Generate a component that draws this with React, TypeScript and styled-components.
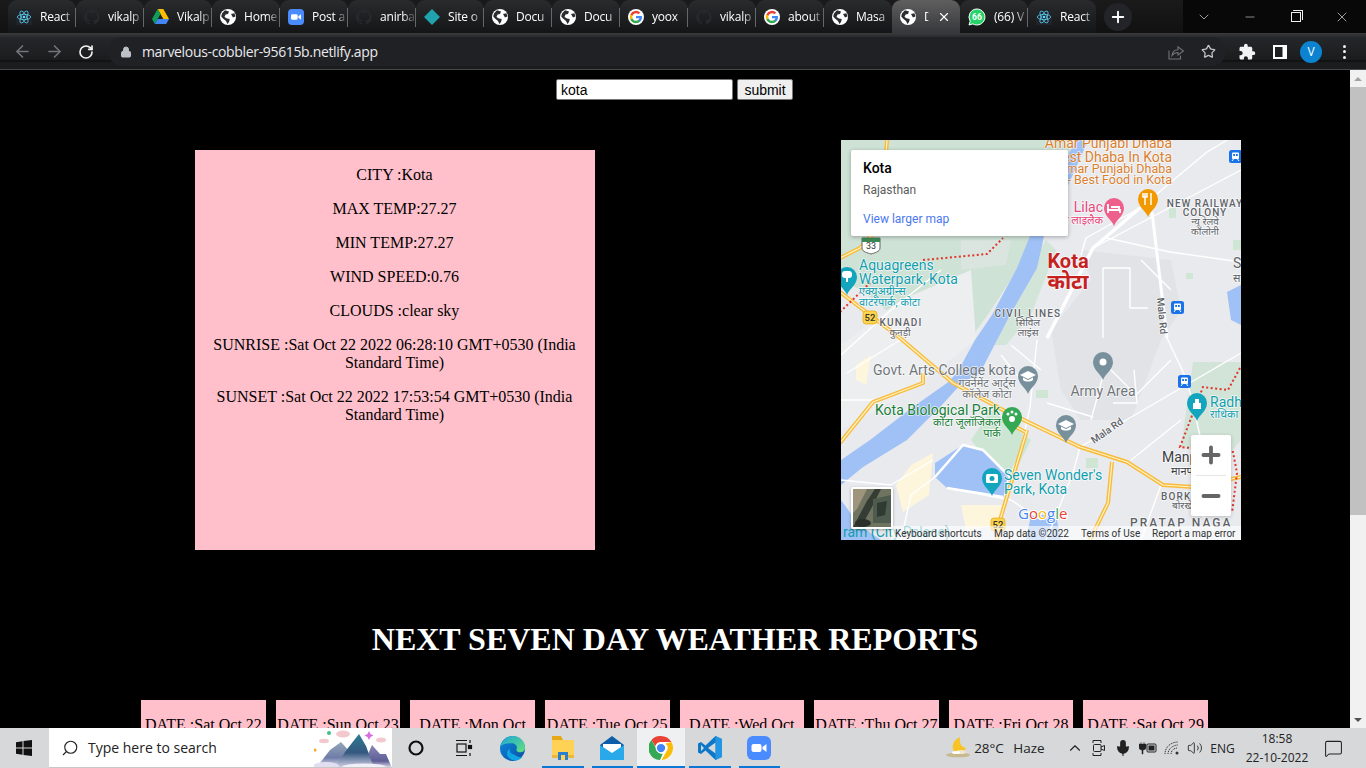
import React from "react";
import styled, { createGlobalStyle } from "styled-components";
import {
  ArrowLeft, ArrowRight, RotateCw, Lock, Star, ChevronDown, Minus, X, Plus,
  Search, ChevronUp, Mic, Volume2, MessageSquare,
} from "lucide-react";
import { MdExtension } from "react-icons/md";

const Global = createGlobalStyle`
  html, body { margin: 0; padding: 0; height: 100%; overflow: hidden; background: #000; }
  * { box-sizing: border-box; }
`;

const Desktop = styled.div`
  width: 1366px; height: 768px; display: flex; flex-direction: column; overflow: hidden;
  font-family: "Open Sans", "Liberation Sans", sans-serif;
`;

/* ---------- browser chrome ---------- */
const TabStrip = styled.div`
  height: 33px; flex: none; display: flex; align-items: flex-end; padding-left: 8px;
  background: linear-gradient(#1a1a1b, #111112);
`;
const Tab = styled.div<{ $active?: boolean; $plain?: boolean }>`
  width: 68px; height: 33px; flex: none; display: flex; align-items: center; gap: 8px; padding: 0 0 0 8px;
  position: relative; border-radius: 9px 9px 0 0; color: #fff; font-size: 12px;
  background: ${(p) => (p.$active ? "linear-gradient(#5f5f60, #36373a)" : "linear-gradient(#2a2b2d, #141517)")};
  &::after {
    content: ""; position: absolute; right: 0; top: 8px; bottom: 6px; width: 1px;
    background: ${(p) => (p.$plain ? "transparent" : "#66676a")};
  }
`;
const TabTitle = styled.span`
  flex: 1; overflow: hidden; white-space: nowrap; letter-spacing: -0.2px;
  -webkit-mask-image: linear-gradient(90deg, #000 62%, rgba(0, 0, 0, 0.25) 92%);
`;
const TabClose = styled(X)`
  flex: none; margin-right: 9px; color: #fff;
`;
const NewTab = styled.div`
  width: 28px; height: 28px; border-radius: 50%; margin: 0 0 2px 8px; background: #232427; color: #fff;
  display: flex; align-items: center; justify-content: center; flex: none;
`;
const Spacer = styled.div`flex: 1;`;
const WindowControls = styled.div`
  display: flex; height: 33px; background: #080808; flex: none; width: 183px; color: #e8e8e8; padding-right: 1px; justify-content: flex-end;
`;
const WindowButton = styled.div`
  width: 46px; display: flex; align-items: center; justify-content: center; flex: none;
`;
const RestoreGlyph = styled.div`
  width: 10px; height: 10px; border: 1px solid #eee; position: relative;
  &::after {
    content: ""; position: absolute; left: 1px; top: -3px; width: 9px; height: 9px;
    border-top: 1px solid #eee; border-right: 1px solid #eee;
  }
`;
const Toolbar = styled.div`
  height: 37px; flex: none; display: flex; align-items: center; padding: 1px 4px 0 6px;
  background: linear-gradient(#3b3b3d 0, #252629 5px, #1b1c1e 27px, #0a0a0a 28px, #1b1c1e 29px, #1b1c1e 36px);
  border-bottom: 1px solid #47484a;
`;
const ToolButton = styled.div<{ $dim?: boolean; $w?: number }>`
  width: ${(p) => p.$w ?? 32}px; height: 28px; display: flex; align-items: center; justify-content: center; flex: none;
  color: ${(p) => (p.$dim ? "#737477" : "#f1f3f4")};
`;
const Omnibox = styled.div`
  flex: 1; height: 29px; border-radius: 15px; background: #202124; margin-left: 6px; margin-right: 4px;
  display: flex; align-items: center; padding: 0 2px 0 12px; color: #e8eaed; font-size: 14px;
`;
const LockSlot = styled.div`
  width: 22px; display: flex; align-items: center; color: #bdc1c6;
`;
const UrlText = styled.span`flex: 1; font-family: "Open Sans", sans-serif; letter-spacing: -0.34px;`;
const Avatar = styled.div`
  width: 22px; height: 22px; border-radius: 50%; background: #0b83d0; color: #fff;
  font-size: 12px; display: flex; align-items: center; justify-content: center;
`;
const Dots = styled.div`
  display: flex; flex-direction: column; gap: 2.5px;
  & > i { width: 3px; height: 3px; border-radius: 50%; background: #f1f3f4; display: block; }
`;

/* ---------- page ---------- */
const Viewport = styled.div`
  flex: 1; min-height: 0; display: flex; overflow: hidden; background: #000;
`;
const Page = styled.main`
  flex: 1; min-width: 0; overflow: hidden; color: #000;
  font-family: "Liberation Serif", "Times New Roman", serif; font-size: 16px;
`;
const SearchForm = styled.form`
  display: flex; justify-content: center; gap: 4px; padding: 9px 1px 0 0; height: 70px;
`;
const CityInput = styled.input`
  width: 177px; height: 21px; border: 1px solid #767676; border-radius: 2px; background: #fff; padding: 1px 2px 1px 4px;
  font-family: "Liberation Sans", Arial, sans-serif; font-size: 14px; color: #000; outline: none;
`;
const SubmitButton = styled.button`
  width: 56px; height: 21px; padding: 0; border: 1px solid #767676; border-radius: 2px; background: #efefef;
  font-family: "Liberation Sans", Arial, sans-serif; font-size: 14px; color: #000;
`;
const WeatherRow = styled.section`
  display: flex; align-items: flex-start; padding-left: 195px; gap: 246px;
`;
const CurrentCard = styled.div`
  width: 400px; height: 400px; margin-top: 10px; padding-right: 1px; background: #ffc0cb; text-align: center; overflow: hidden;
`;
const Line = styled.p`margin: 16px 0;`;
const MapFrame = styled.div`
  width: 400px; height: 400px; position: relative; overflow: hidden; background: #e8eaed; flex: none;
  font-family: Roboto, "Liberation Sans", sans-serif;
`;
const MapDrawing = styled.svg`display: block;`;
const InfoBox = styled.div`
  position: absolute; left: 10px; top: 10px; width: 217px; height: 86px; background: #fff; padding: 9px 12px;
  box-shadow: 0 1px 4px rgba(0, 0, 0, 0.3); border-radius: 2px;
`;
const InfoTitle = styled.div`font-size: 14px; font-weight: 500; line-height: 18px; color: #000;`;
const InfoSub = styled.div`font-size: 12px; line-height: 16px; color: #5b5b5b; margin-top: 5px;`;
const InfoLink = styled.div`font-size: 12px; line-height: 16px; color: #4a78f0; margin-top: 13px;`;
const ZoomBox = styled.div`
  position: absolute; left: 350px; top: 295px; width: 40px; height: 81px; background: #fff; border-radius: 2px;
  display: flex; flex-direction: column; align-items: center; color: #666;
  box-shadow: 0 1px 4px rgba(0, 0, 0, 0.2);
`;
const ZoomButton = styled.div`
  height: 40px; width: 100%; display: flex; align-items: center; justify-content: center;
`;
const ZoomRule = styled.div`width: 30px; height: 1px; background: #e6e6e6; flex: none;`;
const SatThumb = styled.div`
  position: absolute; left: 10px; top: 347px; width: 42px; height: 42px; border: 2px solid #fff; border-radius: 2px;
  overflow: hidden; background: #5d6a55; box-shadow: 0 1px 3px rgba(0,0,0,.3);
`;
const Attribution = styled.div`
  position: absolute; left: 50px; right: 0; bottom: 0; height: 14px; background: rgba(255, 255, 255, 0.62);
  display: flex; align-items: center; font-size: 10px; color: #333; white-space: nowrap; padding-left: 4px;
`;
const AttrItem = styled.span<{ $w: number }>`width: ${(p) => p.$w}px; flex: none;`;
const Heading = styled.h1`
  margin: 71px 0 42px; font-size: 32px; line-height: 37px; font-weight: 700; color: #fff; text-align: center;
`;
const ForecastRow = styled.section`
  display: grid; grid-template-columns: repeat(8, 124.6px); column-gap: 10px; justify-content: center; padding-right: 1px;
`;
const DayCard = styled.div`
  height: 220px; background: #ffc0cb; text-align: center;
`;
const Scrollbar = styled.div`
  width: 16px; flex: none; background: #f1f1f1; display: flex; flex-direction: column; align-items: center;
`;
const ScrollArrow = styled.div<{ $down?: boolean }>`
  width: 16px; height: 17px; flex: none; display: flex; align-items: center; justify-content: center;
  &::before {
    content: ""; border-left: 4px solid transparent; border-right: 4px solid transparent;
    ${(p) => (p.$down ? "border-top: 4px solid #505050;" : "border-bottom: 4px solid #a3a3a3;")}
  }
`;
const ScrollThumb = styled.div`width: 16px; height: 428px; background: #c1c1c1; flex: none;`;
const ScrollTrack = styled.div`flex: 1;`;

/* ---------- taskbar ---------- */
const Taskbar = styled.footer`
  height: 40px; flex: none; display: flex; align-items: stretch; background: #d6d8da; color: #111; position: relative;
`;
const StartButton = styled.div`
  width: 48px; display: flex; align-items: center; justify-content: center; flex: none;
`;
const SearchBox = styled.div`
  width: 343px; margin-left: 1px; background: #fff; display: flex; align-items: center; padding-left: 12px; gap: 9px; flex: none;
  font-size: 14px; color: #222; position: relative; overflow: hidden; border-bottom: 1px solid #c8c8c8;
`;
const SearchArt = styled.svg`position: absolute; right: 0; top: 0;`;
const TaskIcon = styled.div<{ $w?: number; $open?: boolean; $active?: boolean }>`
  width: ${(p) => p.$w ?? 49.5}px; flex: none; display: flex; align-items: center; justify-content: center; position: relative;
  background: ${(p) => (p.$active ? "#eff0f1" : "transparent")};
  &::after {
    content: ""; position: absolute; left: ${(p) => (p.$active ? 0 : 4)}px; right: ${(p) => (p.$active ? 0 : 4)}px; bottom: 0; height: 2px;
    background: ${(p) => (p.$open ? "#0a78d4" : "transparent")};
  }
`;
const Tray = styled.div`
  flex: 1; display: flex; align-items: center; justify-content: flex-end; font-size: 12.5px; color: #222; padding-right: 15px;
`;
const TrayIcon = styled.div<{ $w: number }>`
  width: ${(p) => p.$w}px; flex: none; display: flex; align-items: center; justify-content: center;
`;
const TrayText = styled.span<{ $w: number; $size?: number }>`
  width: ${(p) => p.$w}px; flex: none; font-size: ${(p) => p.$size ?? 13.5}px; text-align: center; white-space: nowrap;
`;
const TrayGap = styled.div<{ $w: number }>`width: ${(p) => p.$w}px; flex: none;`;
const Clock = styled.div`
  width: 76px; flex: none; display: flex; flex-direction: column; align-items: center; font-size: 12px; line-height: 19px;
`;

/* ---------- icons ---------- */
const GlobeIcon = () => (
  <svg width="16" height="16" viewBox="0 0 16 16">
    <circle cx="8" cy="8" r="8" fill="#fff" />
    <path d="M5 1.200 9 2.500 8 5 5.500 5.500 4.500 8 7 9.500 9.800 10 9 13 7.500 15 6 12 3 9.500 1.200 7.500 2 4.500ZM11 5l3.500-.8.900 3.300L13 8.500Z" fill="#2b2c2f" />
  </svg>
);
const ReactIcon = () => (
  <svg width="16" height="18" viewBox="0 0 24 26">
    <rect x="0" y="1" width="24" height="24" fill="#20232a" />
    <g fill="none" stroke="#61dafb" strokeWidth="1.100">
      <ellipse cx="12" cy="13" rx="10" ry="4" />
      <ellipse cx="12" cy="13" rx="10" ry="4" transform="rotate(60 12 13)" />
      <ellipse cx="12" cy="13" rx="10" ry="4" transform="rotate(120 12 13)" />
    </g>
    <circle cx="12" cy="13" r="2" fill="#61dafb" />
  </svg>
);
const GithubIcon = () => (
  <svg width="16" height="16" viewBox="0 0 16 16">
    <path fill="#26282b" d="M8 0a8 8 0 0 0-2.500 15.600c.4.100.5-.2.500-.4v-1.400c-2.200.5-2.700-1-2.700-1-.4-.9-.9-1.200-.9-1.200-.7-.5.100-.5.100-.5.800.100 1.200.8 1.200.8.700 1.200 1.900.9 2.300.7.100-.5.300-.9.500-1.100-1.800-.2-3.600-.9-3.600-4 0-.9.300-1.600.8-2.100-.1-.2-.4-1 .1-2.100 0 0 .7-.2 2.200.8a7.500 7.500 0 0 1 4 0c1.500-1 2.200-.8 2.200-.8.400 1.100.2 1.900.1 2.100.5.600.8 1.300.8 2.100 0 3.100-1.900 3.700-3.700 3.900.3.300.6.800.6 1.500v2.200c0 .2.100.5.600.4A8 8 0 0 0 8 0Z" />
  </svg>
);
const DriveIcon = () => (
  <svg width="17" height="15" viewBox="0 0 24 21">
    <path d="M8 0h8l8 14h-8Z" fill="#fbbc04" />
    <path d="M8 0 0 14l4 7 8-14Z" fill="#0f9d58" />
    <path d="M4 21h16l4-7H8Z" fill="#4285f4" />
  </svg>
);
const ZoomIcon = ({ size = 16 }: { size?: number }) => (
  <svg width={size} height={size} viewBox="0 0 24 24">
    <rect width="24" height="24" rx="6" fill="#4a8cff" />
    <rect x="4.500" y="8" width="10" height="8" rx="2" fill="#fff" />
    <path d="M15.500 11 19.500 8v8l-4-3Z" fill="#fff" />
  </svg>
);
const SiteIcon = () => (
  <svg width="16" height="16" viewBox="0 0 16 16">
    <path d="M8 0l8 8-8 8-8-8Z" fill="#1fa3ae" />
  </svg>
);
const GoogleIcon = () => (
  <svg width="16" height="16" viewBox="0 0 18 18">
    <circle cx="9" cy="9" r="9" fill="#fff" />
    <path d="M15.700 9.200c0-.5 0-.9-.1-1.300H9v2.500h3.800a3.200 3.200 0 0 1-1.400 2.100v1.700h2.300c1.300-1.200 2-3 2-5Z" fill="#4285f4" />
    <path d="M9 16c1.900 0 3.500-.6 4.700-1.800l-2.300-1.700c-.6.400-1.400.7-2.400.7-1.900 0-3.400-1.200-4-2.900H2.700v1.800A7 7 0 0 0 9 16Z" fill="#34a853" />
    <path d="M5 10.300a4.200 4.200 0 0 1 0-2.600V5.900H2.700a7 7 0 0 0 0 6.200Z" fill="#fbbc05" />
    <path d="M9 4.800c1 0 2 .4 2.700 1.100l2-2A7 7 0 0 0 2.700 5.900L5 7.700c.6-1.700 2.100-2.900 4-2.900Z" fill="#ea4335" />
  </svg>
);
const WhatsIcon = () => (
  <svg width="18" height="18" viewBox="0 0 18 18">
    <path d="M9 1a8 8 0 0 0-6.800 12.200L1 17l3.900-1.100A8 8 0 1 0 9 1Z" fill="#25d366" stroke="#fff" strokeWidth="1" />
    <text x="9" y="12" fontSize="8.500" fontWeight="700" textAnchor="middle" fill="#fff" fontFamily="Roboto, sans-serif">66</text>
  </svg>
);
const ShareIcon = () => (
  <svg width="16" height="16" viewBox="0 0 16 16" fill="none" stroke="currentColor" strokeWidth="1.100">
    <path d="M1 6.500V15H12.500V11.500" />
    <path d="M4 11.500C4.500 7.500 7.500 5.800 10 5.800V2.800L15.500 7 10 11V8.500C7.500 8.500 5.500 9.500 4 11.500Z" />
  </svg>
);
const WindowsLogo = () => (
  <svg width="16" height="16" viewBox="0 0 16 16">
    <path d="M0 2.300 6.500 1.300V7.500H0ZM7.500 1.100 16 0V7.500H7.500ZM0 8.500H6.500V14.700L0 13.700ZM7.500 8.500H16V16L7.500 14.900Z" fill="#111" />
  </svg>
);
const TaskViewIcon = () => (
  <svg width="18" height="18" viewBox="0 0 18 18" fill="none" stroke="#111" strokeWidth="1.200">
    <path d="M1 1.500h11M1 16.500h11" />
    <rect x="2" y="5" width="9" height="8" />
    <path d="M15 1v3M15 14v3" />
    <rect x="13.500" y="6.500" width="3" height="3" fill="#111" />
  </svg>
);
const EdgeIcon = () => (
  <svg width="25" height="25" viewBox="0 0 24 24">
    <defs>
      <linearGradient id="edgeA" x1="0" y1="0" x2="1" y2="1">
        <stop offset="0" stopColor="#1ba6d8" />
        <stop offset="1" stopColor="#66e07c" />
      </linearGradient>
      <linearGradient id="edgeB" x1="0" y1="0" x2="1" y2="1">
        <stop offset="0" stopColor="#0c8adf" />
        <stop offset="1" stopColor="#0a4fa0" />
      </linearGradient>
    </defs>
    <circle cx="12" cy="12" r="12" fill="url(#edgeB)" />
    <path d="M.4 10C2 3.500 7.500 0 12.500 0 19 0 24 5 24 11c0 3.800-3.200 5.300-6 4.500-2-.6-2.600-2-2-3.300.8-3-1.800-5.200-4.500-5.200C7.500 7 2.500 7.500.4 10Z" fill="url(#edgeA)" />
    <path d="M13 17.500c-3 0-4.500-3-3.200-5.200-2 .5-3.700 3-3 5.700.8 3 4 5.500 8 5.500 2.500 0 5.200-1.200 7-3.500-2.800 1.300-6.300-1-8.800-2.500Z" fill="#10a4e4" />
  </svg>
);
const FolderIcon = () => (
  <svg width="22" height="24" viewBox="0 0 22 24">
    <path d="M0 0h9l2 4H0Z" fill="#e6a817" />
    <rect y="4" width="22" height="15" fill="#ffd154" />
    <rect y="19" width="22" height="3" fill="#e9b93b" />
    <rect x="6" y="16" width="10" height="8" fill="#2a7fcf" />
    <rect x="9" y="19" width="4" height="5" fill="#ffd154" />
  </svg>
);
const MailIcon = () => (
  <svg width="24" height="24" viewBox="0 0 24 24">
    <path d="M0 9 12 0l12 9v15H0Z" fill="#0c5ea8" />
    <path d="M3 8h18v8l-9 5-9-5Z" fill="#fff" />
    <path d="M0 9l12 8 12-8v15H0Z" fill="#29a8ea" />
  </svg>
);
const ChromeIcon = ({ size = 16 }: { size?: number }) => (
  <svg width={size} height={size} viewBox="0 0 48 48">
    <circle cx="24" cy="24" r="24" fill="#fff" />
    <path d="M24 0a24 24 0 0 1 20.800 12H24a12 12 0 0 0-11.500 8.500L5 8A24 24 0 0 1 24 0Z" fill="#ea4335" />
    <path d="M44.800 12A24 24 0 0 1 25 48l10-17.500A12 12 0 0 0 33 15Z" fill="#fbbc05" />
    <path d="M5 8l10.500 19a12 12 0 0 0 12 8.600L22 48A24 24 0 0 1 5 8Z" fill="#34a853" />
    <circle cx="24" cy="24" r="9.500" fill="#4285f4" stroke="#fff" strokeWidth="2.500" />
  </svg>
);
const VSCodeIcon = () => (
  <svg width="24" height="24" viewBox="0 0 24 24">
    <path d="M17.500 0 24 3v18l-6.500 3-10-9.500L3 18 0 16.500v-9L3 6l4.500 3.500Z" fill="#0e78c8" />
    <path d="M17.500 6.500 10 12l7.500 5.500ZM3 9v6l3-3Z" fill="#d6d8da" />
    <path d="M17.500 0 24 3v18l-6.500 3Z" fill="#2aa3ec" fillOpacity=".7" />
  </svg>
);
const WeatherGlyph = () => (
  <svg width="26" height="24" viewBox="0 0 26 24">
    <path d="M15 1c-1 6 1 10 6 11-2 5-7 6-11 4C6 13 7 4 15 1Z" fill="#f7c325" />
    <ellipse cx="13" cy="19" rx="12" ry="2.300" fill="#c9b98f" />
    <ellipse cx="16" cy="16" rx="5" ry="2" fill="#efe6cf" />
    <ellipse cx="11" cy="16.500" rx="4" ry="1.500" fill="#fff" />
  </svg>
);
const CameraTray = () => (
  <svg width="14" height="20" viewBox="0 0 14 20" fill="none" stroke="#222" strokeWidth="1">
    <path d="M1 5V2.500h8V5M1 15v2.500h8V15" />
    <rect x="1.500" y="6.500" width="7.500" height="7" rx="1" />
    <path d="M9 9l3.500-1.500v5L9 11" />
  </svg>
);
const PowerTray = () => (
  <svg width="18" height="14" viewBox="0 0 18 14" fill="#222">
    <path d="M2 1v2M5 1v2M0 3h7v3a3 3 0 0 1-3 3v4H3V9a3 3 0 0 1-3-3Z" stroke="#222" strokeWidth=".5" />
    <rect x="8" y="3" width="9" height="8" rx="1" fill="none" stroke="#222" />
    <rect x="9.500" y="4.500" width="6" height="5" />
  </svg>
);
const WifiTray = () => (
  <svg width="16" height="16" viewBox="0 0 16 16" fill="none" stroke="#333" strokeWidth="1" strokeDasharray="1.200 .8">
    <path d="M1 14C1 7 7 2 14 2" />
    <path d="M4 14C4 9 9 5 14 5" />
    <path d="M7 14C7 11 10 8 13 8" />
    <circle cx="13" cy="13" r="1.500" fill="#333" stroke="none" />
  </svg>
);

/* ---------- map drawing ---------- */
const Pin = ({ x, y, color, children }: { x: number; y: number; color: string; children?: React.ReactNode }) => (
  <g transform={`translate(${x} ${y})`}>
    <path d="M0 0C-2-6-10-10-10-18a10 10 0 0 1 20 0C10-10 2-6 0 0Z" fill={color} />
    <g transform="translate(0 -18)">{children}</g>
  </g>
);
const Metro = ({ x, y }: { x: number; y: number }) => (
  <g transform={`translate(${x - 6} ${y - 6})`}>
    <rect width="13" height="13" rx="2.500" fill="#1a73e8" />
    <rect x="3" y="2.500" width="7" height="6.500" rx="1" fill="#fff" />
    <path d="M3 11l1.500-2M10 11 8.500 9" stroke="#fff" />
    <rect x="4.200" y="4" width="1.800" height="2" fill="#1a73e8" />
    <rect x="7" y="4" width="1.800" height="2" fill="#1a73e8" />
  </g>
);
const Shield = ({ x, y, n }: { x: number; y: number; n: string }) => (
  <g transform={`translate(${x} ${y})`}>
    <rect x="-7" y="-6" width="14" height="13" rx="3" fill="#fcd34d" stroke="#e8a90c" strokeWidth=".7" />
    <text y="4" textAnchor="middle" fontSize="9.500" fontWeight="500" fill="#333">{n}</text>
  </g>
);
const Cap = () => (
  <g fill="#fff">
    <path d="M0-5-8-1 0 3 8-1Z" />
    <path d="M-5 1.500V4C-3 6 3 6 5 4V1.500L0 4Z" />
  </g>
);
const devanagari = "Roboto, 'Noto Sans', 'DejaVu Sans', sans-serif";
const halo = { paintOrder: "stroke", stroke: "rgba(255,255,255,.75)", strokeWidth: 1.5, strokeLinejoin: "round" } as React.CSSProperties;
const MapLabel = ({ x, y, c, s = 14, a = "start", w = 400, ls, children, hi }: {
  x: number; y: number; c: string; s?: number; a?: "start" | "middle" | "end"; w?: number; ls?: number; hi?: boolean; children: React.ReactNode;
}) => (
  <text x={x} y={y} fill={c} fontSize={s} textAnchor={a} fontWeight={w} letterSpacing={ls} fontFamily={hi ? devanagari : undefined} style={halo}>
    {children}
  </text>
);

const ROADS_WHITE = [
  "M206 198 252 108 299 68 366 12 400-8",
  "M196 200 189 267 179 313 165 345",
  "M311 72 326 198 346 240 360 300",
  "M239 307 400 213",
  "M0 215 50 170 100 130",
  "M252 108 400 30",
  "M299 68 245 98 240 115",
  "M266 98 329 112 400 122",
  "M262 128H289V142M262 128V198M289 142V168H307",
  "M170 205 200 230M160 215 180 240",
  "M206 263 252 277M272 263H296L293 230",
  "M250 280 265 225 295 255 330 220",
  "M239 307 232 333 216 373 205 400",
  "M92 320 50 345 0 340",
  "M0 260H32M6 233 59 200",
  "M94 337 70 355 60 400M106 348 170 360 200 380",
  "M320 345 300 400M350 360 380 400M290 320 340 280",
  "M300 120 330 150",
];
const ROADS_YELLOW = [
  "M-1 152 59 198 112 243 162 270 239 307 286 322 322 345 352 347 400 337",
  "M-1 303 32 262 82 243 82 233",
  "M186 290 159 380 156 400",
  "M271 322 267 363 249 400",
  "M-1 118 19 108 40 85 46 0",
  "M162 280 186 293",
];

const MapArt = () => (
  <MapDrawing width="400" height="400" viewBox="0 0 400 400">
    <rect width="400" height="400" fill="#e8eaed" />
    <path d="M0 0H235L203 96 176 130 150 170 130 198 70 190 20 150 0 140Z" fill="#cfe2d6" />
    <path d="M205 100 215 110 190 175 165 205 150 205 185 130Z" fill="#d3e4d8" />
    <path d="M0 205 60 160 130 130 135 200 70 250 0 290Z" fill="#eceef0" />
    <path d="M120 100H170L165 125 120 130Z" fill="#d9e5de" />
    <path d="M210 190 250 140 240 110 330 120 340 170 320 200 290 280 240 280 220 250Z" fill="#e1e3e6" />
    <path d="M352 222 400 222 400 300 390 312 340 308Z" fill="#d2e3d8" />
    <path d="M130 300 150 270 190 300 170 340 150 325Z" fill="#cde6d3" />
    <path d="M70 325 92 313 88 355 62 372 55 345Z" fill="#fdf6dc" />
    <path d="M15 225 30 215 25 245 15 240Z" fill="#fdf6dc" />
    <path d="M120 365 165 365 160 385 125 390Z" fill="#fdf6dc" />
    <rect x="195" y="250" width="12" height="8" fill="#cfe6d4" />
    <rect x="245" y="318" width="12" height="10" fill="#cfe6d4" />
    <rect x="345" y="133" width="7" height="6" fill="#cfe6d4" />
    <rect x="328" y="68" width="7" height="10" fill="#cfe6d4" />
    <rect x="392" y="100" width="8" height="10" fill="#cfe6d4" />
    {/* water */}
    <path d="M240 0 245 5 225 50 203 96 196 128 169 175 156 200 139 233 121 243 99 267 66 300 22 327 0 345 0 320 29 300 72 267 106 243 116 233 134 200 151 175 176 128 189 96 215 40 235 0Z" fill="#9fc1f5" />
    <path d="M94 323 122 305 142 310 169 337 162 357 142 355 106 348 94 337Z" fill="#9fc1f5" />
    <path d="M0 360 18 385 40 400 0 400Z" fill="#9fc1f5" />
    <path d="M386 152 400 145 400 185 390 180Z" fill="#9fc1f5" />
    <path d="M190 375 215 375 220 400 185 400Z" fill="#9fc1f5" />
    {/* roads */}
    <g fill="none" stroke="#fff" strokeWidth="1.400" strokeLinejoin="round">
      {ROADS_WHITE.map((d) => <path key={d} d={d} />)}
    </g>
    <path d="M94 337 122 305 142 310 169 337M106 348 162 357" fill="none" stroke="#fff" strokeWidth="2.500" />
    <path d="M206 198 252 108 299 68" fill="none" stroke="#fff" strokeWidth="3.500" />
    <path d="M311 72 326 198" fill="none" stroke="#fff" strokeWidth="3" />
    <g fill="none" strokeLinejoin="round">
      {ROADS_YELLOW.map((d) => <path key={d} d={d} stroke="#f9bb3a" strokeWidth="4" />)}
      {ROADS_YELLOW.map((d) => <path key={`i${d}`} d={d} stroke="#fff3c9" strokeWidth="1.200" />)}
    </g>
    {/* boundaries */}
    <g fill="none" stroke="#e0352a" strokeWidth="2" strokeDasharray="2 2.500">
      <path d="M-1 172 29 143" />
      <path d="M82 120 146 114 162 98" />
      <path d="M399 228 387 250 362 247 352 273 339 307 392 312 396 333 391 373" />
    </g>
    {/* labels */}
    <MapLabel x={331} y={8} c="#d9802e" a="end">Amar Punjabi Dhaba</MapLabel>
    <MapLabel x={331} y={22} c="#d9802e" a="end">Best Dhaba In Kota</MapLabel>
    <MapLabel x={331} y={33} c="#d9802e" a="end" s={12.500}>Amar Punjabi Dhaba</MapLabel>
    <MapLabel x={331} y={44} c="#d9802e" a="end" s={12.500}>- Best Food in Kota</MapLabel>
    <MapLabel x={262} y={72} c="#e8467c" a="end">Lilac</MapLabel>
    <MapLabel x={262} y={84} c="#e8467c" a="end" s={11} hi>होटल लाइलैक</MapLabel>
    <Pin x={273} y={86} color="#ee5f8b"><path d="M-6-4V5M-6 2H6V5M-3-1H5V2" stroke="#fff" strokeWidth="1.800" fill="none" /></Pin>
    <Pin x={307} y={77} color="#f29900"><path d="M-3-6V6M3-6V6M-5-6V-2H-1V-6" stroke="#fff" strokeWidth="1.500" fill="none" /></Pin>
    <MapLabel x={364} y={67} c="#5f6368" a="middle" s={10} ls={1} w={500}>NEW RAILWAY</MapLabel>
    <MapLabel x={364} y={76} c="#5f6368" a="middle" s={10} ls={1} w={500}>COLONY</MapLabel>
    <MapLabel x={364} y={85} c="#5f6368" a="middle" s={10} hi>न्यू रेलवे</MapLabel>
    <MapLabel x={364} y={95} c="#5f6368" a="middle" s={10} hi>कॉलोनी</MapLabel>
    <MapLabel x={392} y={128} c="#5f6368">S</MapLabel>
    <MapLabel x={392} y={142} c="#5f6368" s={11} hi>स</MapLabel>
    <Metro x={394} y={16} /><Metro x={336} y={167} /><Metro x={343} y={241} />
    <g transform="translate(30 105)">
      <path d="M-9-7H9V3C9 7 3 8 0 9-3 8-9 7-9 3Z" fill="#fff" stroke="#666" />
      <path d="M-9-7H9V-3H-9Z" fill="#3c8a55" />
      <text y="4" textAnchor="middle" fontSize="9" fill="#333">33</text>
    </g>
    <Shield x={29} y={177} n="52" />
    <Shield x={157} y={384} n="52" />
    <MapLabel x={18} y={130} c="#129eaf" s={14}>Aquagreens</MapLabel>
    <MapLabel x={18} y={144} c="#129eaf" s={14}>Waterpark, Kota</MapLabel>
    <MapLabel x={18} y={155} c="#129eaf" s={11} hi>एक्यूअग्रीन्स</MapLabel>
    <MapLabel x={18} y={166} c="#129eaf" s={11} hi>वाटरपार्क, कोटा</MapLabel>
    <Pin x={6} y={155} color="#12a5bd"><rect x="-5" y="-6" width="10" height="7" rx="3" fill="#fff" /><rect x="-1" y="0" width="2" height="5" fill="#fff" /></Pin>
    <MapLabel x={227} y={128} c="#c5221f" a="middle" s={20} w={700}>Kota</MapLabel>
    <MapLabel x={227} y={149} c="#c5221f" a="middle" s={21} w={700} hi>कोटा</MapLabel>
    <MapLabel x={60} y={186} c="#5f6368" a="middle" s={10} ls={1.200} w={500}>KUNADI</MapLabel>
    <MapLabel x={59} y={196} c="#5f6368" a="middle" s={10} hi>कुनड़ी</MapLabel>
    <MapLabel x={187} y={177} c="#5f6368" a="middle" s={10} ls={1.200} w={500}>CIVIL LINES</MapLabel>
    <MapLabel x={187} y={186} c="#5f6368" a="middle" s={10} hi>सिविल</MapLabel>
    <MapLabel x={187} y={196} c="#5f6368" a="middle" s={10} hi>लाइंस</MapLabel>
    <g transform="translate(316 158) rotate(85)"><MapLabel x={0} y={0} c="#5f6368" s={10} w={500}>Mala Rd</MapLabel></g>
    <MapLabel x={32} y={235} c="#70757a" s={14}>Govt. Arts College kota</MapLabel>
    <MapLabel x={146} y={247} c="#70757a" a="middle" s={11} hi>गवर्नमेंट आर्ट्स</MapLabel>
    <MapLabel x={146} y={258} c="#70757a" a="middle" s={11} hi>कॉलेज कोटा</MapLabel>
    <Pin x={187} y={254} color="#78909c"><Cap /></Pin>
    <Pin x={262} y={240} color="#78909c"><circle r="3.500" fill="#fff" /></Pin>
    <MapLabel x={262} y={256} c="#70757a" a="middle" s={14}>Army Area</MapLabel>
    <MapLabel x={34} y={275} c="#188038" s={14}>Kota Biological Park</MapLabel>
    <MapLabel x={126} y={286} c="#188038" a="middle" s={11} hi>कोटा जूलॉजिकल</MapLabel>
    <MapLabel x={151} y={297} c="#188038" a="middle" s={11} hi>पार्क</MapLabel>
    <Pin x={171} y={295} color="#34a853"><circle cy="2" r="3" fill="#fff" /><circle cx="-4" cy="-3" r="1.500" fill="#fff" /><circle cx="4" cy="-3" r="1.500" fill="#fff" /><circle cy="-5" r="1.500" fill="#fff" /></Pin>
    <Pin x={225} y={303} color="#78909c"><Cap /></Pin>
    <g transform="translate(253 304) rotate(-35)"><MapLabel x={0} y={0} c="#5f6368" s={10} w={500}>Mala Rd</MapLabel></g>
    <Pin x={356} y={281} color="#12a5bd"><path d="M-4 6H4V0H2V-4H-2V0H-4Z" fill="#fff" /></Pin>
    <MapLabel x={369} y={267} c="#129eaf" s={14}>Radh</MapLabel>
    <MapLabel x={369} y={278} c="#129eaf" s={11} hi>राधिका</MapLabel>
    <MapLabel x={321} y={322} c="#3c4043" s={14}>Manp</MapLabel>
    <MapLabel x={330} y={335} c="#3c4043" s={11} hi>मानप</MapLabel>
    <MapLabel x={320} y={360} c="#5f6368" s={10} ls={1.200} w={500}>BORKH</MapLabel>
    <MapLabel x={331} y={369} c="#5f6368" s={10} hi>बोरखे</MapLabel>
    <MapLabel x={289} y={387} c="#5f6368" s={12} ls={2} w={500}>PRATAP NAGA</MapLabel>
    <MapLabel x={163} y={340} c="#129eaf" s={14}>Seven Wonder's</MapLabel>
    <MapLabel x={163} y={354} c="#129eaf" s={14}>Park, Kota</MapLabel>
    <Pin x={151} y={356} color="#12a5bd"><rect x="-6" y="-4" width="12" height="9" rx="1.500" fill="#fff" /><circle cy=".5" r="2.500" fill="#12a5bd" /></Pin>
    <text x={2} y={397} fill="#129eaf" fontSize="14">ram (City Palace)</text>
    <text x={177} y={379} fontSize="15" fontWeight="500" style={{ paintOrder: "stroke", stroke: "#fff", strokeWidth: 2 }} fontFamily="'Open Sans', sans-serif">
      <tspan fill="#4285f4">G</tspan><tspan fill="#ea4335">o</tspan><tspan fill="#fbbc05">o</tspan><tspan fill="#4285f4">g</tspan><tspan fill="#34a853">l</tspan><tspan fill="#ea4335">e</tspan>
    </text>
  </MapDrawing>
);
const SatArt = () => (
  <svg width="38" height="38" viewBox="0 0 38 38">
    <rect width="38" height="38" fill="#6f7460" />
    <path d="M0 38 14 12 22 0H28L18 20 8 38Z" fill="#343c34" />
    <path d="M20 10 38 6V34H20Z" fill="#4f5b4f" />
    <path d="M24 14 34 12 32 26 24 28Z" fill="#2f3a33" />
    <path d="M0 0H14L4 20 0 24Z" fill="#9f947c" />
    <ellipse cx="10" cy="34" rx="8" ry="4" fill="#2a302a" />
  </svg>
);
const MountainArt = () => (
  <SearchArt width="78" height="40" viewBox="0 0 78 40">
    <defs>
      <linearGradient id="mtnA" x1="0" y1="0" x2="0" y2="1">
        <stop offset="0" stopColor="#2d7a92" />
        <stop offset="0.55" stopColor="#35587f" />
        <stop offset="1" stopColor="#d9d6ec" />
      </linearGradient>
      <linearGradient id="mtnB" x1="0" y1="0" x2="0" y2="1">
        <stop offset="0" stopColor="#93a7b8" />
        <stop offset="0.6" stopColor="#6f7ca8" />
        <stop offset="1" stopColor="#ece9f6" />
      </linearGradient>
      <linearGradient id="mtnC" x1="0" y1="0" x2="0" y2="1">
        <stop offset="0" stopColor="#8a88b8" />
        <stop offset="0.7" stopColor="#5d5f95" />
        <stop offset="1" stopColor="#ece9f6" />
      </linearGradient>
    </defs>
    <path d="M2 40 16 22 27 14 36 24 40 40Z" fill="url(#mtnB)" />
    <path d="M48 40 58 17 66 26 72 26 78 40Z" fill="url(#mtnC)" />
    <path d="M20 40 34 20 45 6 52 18 60 40Z" fill="url(#mtnA)" />
    <ellipse cx="12" cy="38" rx="13" ry="4" fill="#e1def0" />
    <ellipse cx="50" cy="39" rx="22" ry="3.500" fill="#f1eff8" />
    <ellipse cx="29" cy="6" rx="7" ry="3.500" fill="#f3c9cf" />
    <ellipse cx="67" cy="12" rx="5" ry="2.500" fill="#f3c9cf" />
    <ellipse cx="10" cy="13" rx="5" ry="2.200" fill="#f3c9cf" />
    <circle cx="15" cy="5" r="2" fill="#42c084" />
    <circle cx="1" cy="22" r="1.500" fill="#f5a623" />
    <path d="M55 3l1.500 3 3 1.500-3 1.500-1.500 3-1.500-3-3-1.500 3-1.500Z" fill="#d86fe0" />
  </SearchArt>
);

/* ---------- data ---------- */
type TabKind = "react" | "github" | "drive" | "globe" | "zoom" | "site" | "google" | "whatsapp";
const TABS: { kind: TabKind; title: string; active?: boolean; plain?: boolean }[] = [
  { kind: "react", title: "React" }, { kind: "github", title: "vikalp" }, { kind: "drive", title: "Vikalp" },
  { kind: "globe", title: "Home" }, { kind: "zoom", title: "Post a" }, { kind: "github", title: "anirba" },
  { kind: "site", title: "Site o" }, { kind: "globe", title: "Docu" }, { kind: "globe", title: "Docu" },
  { kind: "google", title: "yoox" }, { kind: "github", title: "vikalp" }, { kind: "google", title: "about" },
  { kind: "globe", title: "Masa", plain: true }, { kind: "globe", title: "D", active: true, plain: true }, { kind: "whatsapp", title: "(66) V" },
  { kind: "react", title: "React", plain: true },
];
const TAB_ICONS: Record<TabKind, React.ReactNode> = {
  react: <ReactIcon />, github: <GithubIcon />, drive: <DriveIcon />, globe: <GlobeIcon />,
  zoom: <ZoomIcon />, site: <SiteIcon />, google: <GoogleIcon />, whatsapp: <WhatsIcon />,
};
const CURRENT = [
  "CITY :Kota", "MAX TEMP:27.27", "MIN TEMP:27.27", "WIND SPEED:0.76", "CLOUDS :clear sky",
  "SUNRISE :Sat Oct 22 2022 06:28:10 GMT+0530 (India Standard Time)",
  "SUNSET :Sat Oct 22 2022 17:53:54 GMT+0530 (India Standard Time)",
];
const DAYS = ["Sat Oct 22", "Sun Oct 23", "Mon Oct 24", "Tue Oct 25", "Wed Oct 26", "Thu Oct 27", "Fri Oct 28", "Sat Oct 29"];

export default function App() {
  return (
    <Desktop>
      <Global />
      <TabStrip>
        {TABS.map((t, i) => (
          <Tab key={i} $active={t.active} $plain={t.plain}>
            {TAB_ICONS[t.kind]}
            <TabTitle>{t.title}</TabTitle>
            {t.active && <TabClose size={14} />}
          </Tab>
        ))}
        <NewTab><Plus size={18} strokeWidth={2.5} /></NewTab>
        <Spacer />
        <WindowControls>
          <WindowButton><ChevronDown size={16} strokeWidth={1} /></WindowButton>
          <WindowButton><Minus size={14} strokeWidth={1} /></WindowButton>
          <WindowButton><RestoreGlyph /></WindowButton>
          <WindowButton><X size={16} strokeWidth={1} /></WindowButton>
        </WindowControls>
      </TabStrip>
      <Toolbar>
        <ToolButton $dim><ArrowLeft size={19} /></ToolButton>
        <ToolButton $dim><ArrowRight size={19} /></ToolButton>
        <ToolButton><RotateCw size={16} strokeWidth={2.5} /></ToolButton>
        <Omnibox>
          <LockSlot><Lock size={12} fill="#bdc1c6" /></LockSlot>
          <UrlText>marvelous-cobbler-95615b.netlify.app</UrlText>
          <ToolButton $dim $w={32}><ShareIcon /></ToolButton>
          <ToolButton $w={32}><Star size={15} color="#c4c7c9" /></ToolButton>
        </Omnibox>
        <ToolButton $w={34}><MdExtension size={18} /></ToolButton>
        <ToolButton $w={32}>
          <svg width="14" height="14" viewBox="0 0 14 14"><path d="M0 0H14V14H0ZM2 2V12H9.500V2Z" fill="#fff" fillRule="evenodd" /></svg>
        </ToolButton>
        <ToolButton $w={30}><Avatar>V</Avatar></ToolButton>
        <ToolButton $w={36}><Dots><i /><i /><i /></Dots></ToolButton>
      </Toolbar>
      <Viewport>
        <Page>
          <SearchForm onSubmit={(e) => e.preventDefault()}>
            <CityInput defaultValue="kota" />
            <SubmitButton type="submit">submit</SubmitButton>
          </SearchForm>
          <WeatherRow>
            <CurrentCard>
              {CURRENT.map((l) => <Line key={l}>{l}</Line>)}
            </CurrentCard>
            <MapFrame>
              <MapArt />
              <InfoBox>
                <InfoTitle>Kota</InfoTitle>
                <InfoSub>Rajasthan</InfoSub>
                <InfoLink>View larger map</InfoLink>
              </InfoBox>
              <ZoomBox>
                <ZoomButton><Plus size={26} strokeWidth={3.5} /></ZoomButton>
                <ZoomRule />
                <ZoomButton><Minus size={26} strokeWidth={3.5} /></ZoomButton>
              </ZoomBox>
              <SatThumb><SatArt /></SatThumb>
              <Attribution>
                <AttrItem $w={99}>Keyboard shortcuts</AttrItem>
                <AttrItem $w={87}>Map data ©2022</AttrItem>
                <AttrItem $w={71}>Terms of Use</AttrItem>
                <AttrItem $w={88}>Report a map error</AttrItem>
              </Attribution>
            </MapFrame>
          </WeatherRow>
          <Heading>NEXT SEVEN DAY WEATHER REPORTS</Heading>
          <ForecastRow>
            {DAYS.map((d) => (
              <DayCard key={d}>
                <Line>DATE :{d}</Line>
              </DayCard>
            ))}
          </ForecastRow>
        </Page>
        <Scrollbar>
          <ScrollArrow />
          <ScrollThumb />
          <ScrollTrack />
          <ScrollArrow $down />
        </Scrollbar>
      </Viewport>
      <Taskbar>
        <StartButton><WindowsLogo /></StartButton>
        <SearchBox>
          <Search size={18} strokeWidth={1.5} style={{ transform: "scaleX(-1)" }} />
          Type here to search
          <MountainArt />
        </SearchBox>
        <TaskIcon $w={48}>
          <svg width="16" height="16" viewBox="0 0 16 16"><circle cx="8" cy="8" r="6.500" fill="none" stroke="#111" strokeWidth="2.200" /></svg>
        </TaskIcon>
        <TaskIcon $w={47}><TaskViewIcon /></TaskIcon>
        <TaskIcon $w={51}><EdgeIcon /></TaskIcon>
        <TaskIcon $open><FolderIcon /></TaskIcon>
        <TaskIcon $open><MailIcon /></TaskIcon>
        <TaskIcon $w={48} $open $active><ChromeIcon size={24} /></TaskIcon>
        <TaskIcon $open><VSCodeIcon /></TaskIcon>
        <TaskIcon $open><ZoomIcon size={24} /></TaskIcon>
        <Tray>
          <TrayIcon $w={32}><WeatherGlyph /></TrayIcon>
          <TrayText $w={30}>28°C</TrayText>
          <TrayText $w={50}>Haze</TrayText>
          <TrayGap $w={7} />
          <TrayIcon $w={28}><ChevronUp size={18} strokeWidth={1.5} /></TrayIcon>
          <TrayIcon $w={20}><CameraTray /></TrayIcon>
          <TrayIcon $w={27}><Mic size={18} fill="#222" strokeWidth={1.5} /></TrayIcon>
          <TrayIcon $w={24}><PowerTray /></TrayIcon>
          <TrayIcon $w={24}><WifiTray /></TrayIcon>
          <TrayIcon $w={22}><Volume2 size={16} strokeWidth={1.3} /></TrayIcon>
          <TrayText $w={33} $size={12}>ENG</TrayText>
          <Clock><span>18:58</span><span>22-10-2022</span></Clock>
          <TrayIcon $w={36}><MessageSquare size={19} strokeWidth={1.3} /></TrayIcon>
        </Tray>
      </Taskbar>
    </Desktop>
  );
}
